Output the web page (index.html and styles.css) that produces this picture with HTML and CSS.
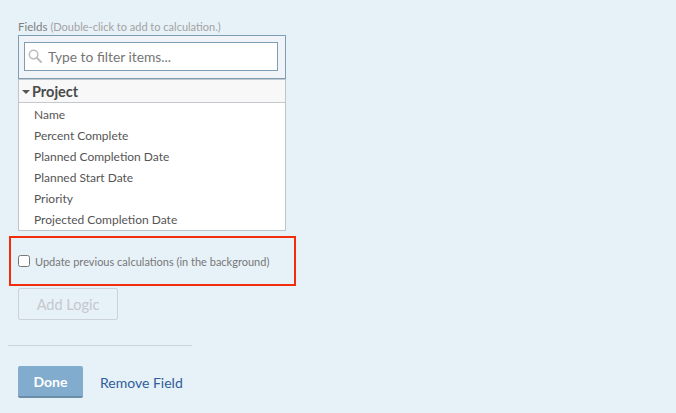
FILE: index.html
```html
<!DOCTYPE html>
<html lang="en">
<head>
    <meta charset="UTF-8">
    <title>Fields</title>
    <link rel="stylesheet" href="styles.css">
</head>
<body>
    <div class="panel">
        <div class="fields-label">Fields <span class="hint">(Double-click to add to calculation.)</span></div>
        <div class="field-box">
            <div class="filter-bar">
                <div class="filter-input">
                    <svg class="search-icon" width="14" height="14" viewBox="0 0 14 14">
                        <circle cx="5.6" cy="5.6" r="4.3" fill="none" stroke="#bdbdbd" stroke-width="1.5"/>
                        <path d="M8.8 8.8 L13 13" stroke="#bdbdbd" stroke-width="2" stroke-linecap="round"/>
                    </svg>
                    <span>Type to filter items...</span>
                </div>
            </div>
            <div class="group-head"><span class="caret"></span>Project</div>
            <ul class="field-list">
                <li>Name</li>
                <li>Percent Complete</li>
                <li>Planned Completion Date</li>
                <li>Planned Start Date</li>
                <li>Priority</li>
                <li>Projected Completion Date</li>
            </ul>
        </div>
        <div class="update-row">
            <label class="update-label"><input type="checkbox"> Update previous calculations (in the background)</label>
        </div>
        <button class="add-logic" disabled>Add Logic</button>
    </div>
    <div class="footer">
        <button class="done">Done</button>
        <a class="remove" href="#">Remove Field</a>
    </div>
</body>
</html>
```

FILE: styles.css
```css
body { margin: 0; padding: 0; background: #e7f1f8; font-family: "Lato", "Open Sans", sans-serif; color: #555; overflow: hidden; }

.panel { width: 288px; padding: 20px 0 0 9px; }
.fields-label { margin-left: 9px; height: 15px; font-size: 11.5px; line-height: 14px; color: #808080; }
.hint { font-size: 11px; color: #a3a3a3; }

.field-box { width: 268px; margin-left: 9px; box-sizing: border-box; border: 1px solid #bfc4c9; border-top: none; background: #fff; }
.filter-bar { margin: 0 -1px; height: 44px; box-sizing: border-box; border: 1px solid #7e9eb6; background: #f0f4f9; padding: 6px 7px 0 5px; }
.filter-input { height: 29px; box-sizing: border-box; border: 1px solid #7e9eb6; background: #fff; display: flex; align-items: center; padding-left: 3px; gap: 6px; font-size: 13.8px; color: #757575; }
.search-icon { flex: none; margin-bottom: 2px; }

.group-head { height: 24px; box-sizing: border-box; padding-top: 1px; border-top: 1px solid #c4c8cc; border-bottom: 1px solid #c4c8cc; background: #f8f8f8; display: flex; align-items: center; padding-left: 3px; font-size: 14.5px; font-weight: 700; color: #4a4a4a; }
.caret { width: 0; height: 0; margin-right: 2px; border-left: 4px solid transparent; border-right: 4px solid transparent; border-top: 4px solid #555; }

.field-list { list-style: none; margin: 0; padding: 1px 0 0 15px; }
.field-list li { height: 21px; line-height: 21px; font-size: 12px; color: #555; }

.update-row { width: 287px; height: 50px; margin-top: 5px; box-sizing: border-box; border: 2px solid #f32c0c; display: flex; align-items: center; padding-left: 7px; }
.update-label { display: flex; align-items: center; gap: 5px; font-size: 11px; color: #777; }
.update-label input { margin: 0; width: 12px; height: 12px; }

.add-logic { display: block; width: 100px; height: 32px; margin: 2px 0 0 9px; border: 1px solid #ccd2d6; border-radius: 2px; background: transparent; font-family: inherit; font-size: 14.5px; color: #c4c8cb; }

.footer { width: 184px; margin: 25px 0 0 8px; padding: 20px 0 0 10px; box-sizing: border-box; border-top: 1px solid #c9d5de; display: flex; align-items: center; gap: 17px; }
.done { width: 65px; height: 32px; border: none; border-bottom: 2px solid #6a8eaa; border-radius: 2px; background: #81acce; color: #fff; font-family: inherit; font-size: 14px; font-weight: 700; }
.remove { font-size: 14px; color: #2f5d9b; text-decoration: none; white-space: nowrap; }
```
